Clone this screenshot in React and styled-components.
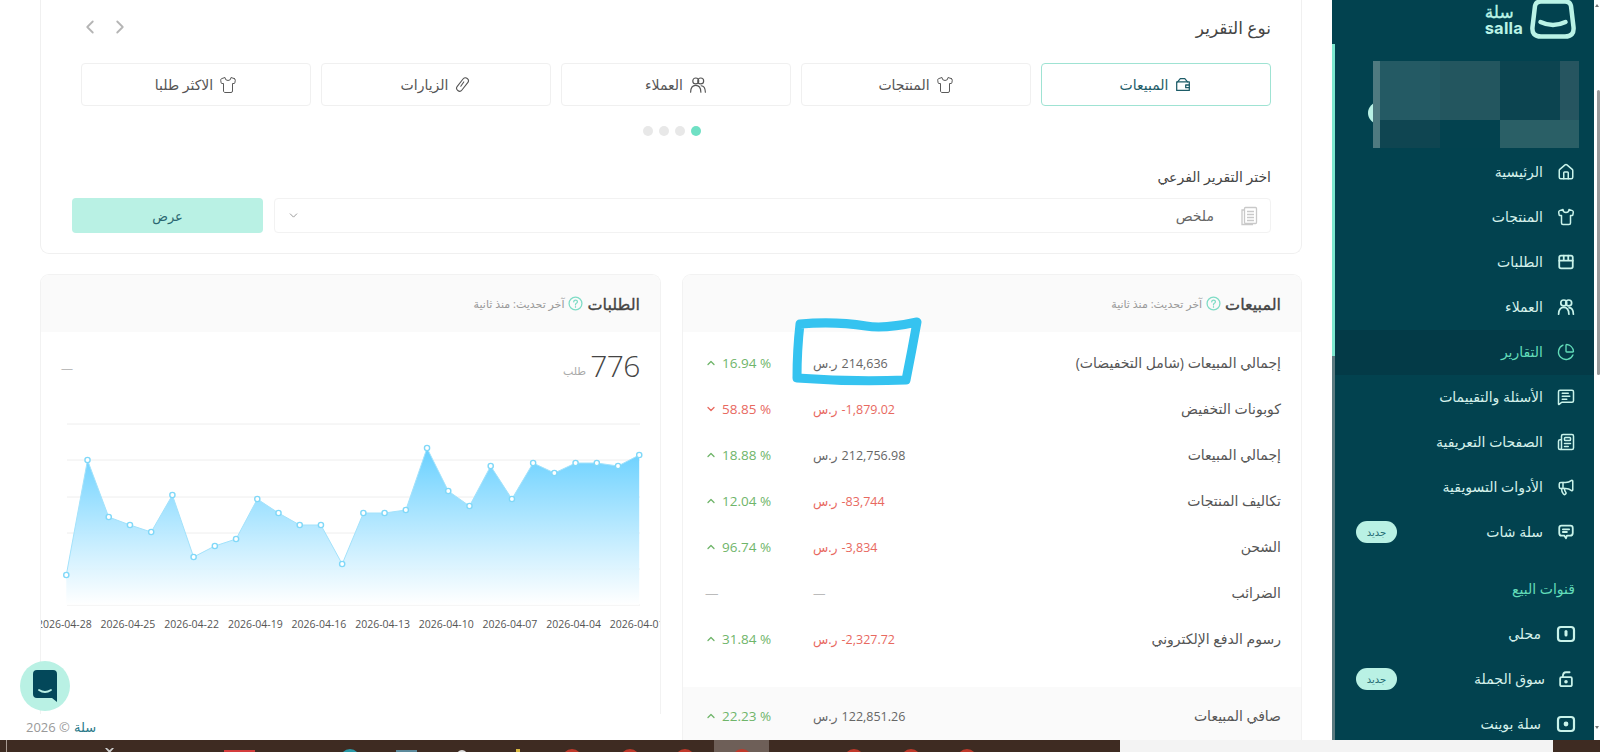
import React from "react";
import styled, { createGlobalStyle } from "styled-components";
import { House, Shirt, ChartPie, MessageSquareText, Newspaper, Megaphone, ChevronLeft, ChevronRight, ChevronDown, ChevronUp } from "lucide-react";

const Global = createGlobalStyle`
  html, body { margin: 0; padding: 0; background: #fff; overflow: hidden; }
  * { box-sizing: border-box; }
  body { font-family: "Open Sans", "DejaVu Sans", sans-serif; }
`;

const Root = styled.div`
  width: 1600px; height: 752px; display: flex; flex-direction: column; overflow: hidden;
`;
const Screen = styled.div`
  height: 740px; display: flex; direction: ltr;
`;
const Main = styled.main`
  position: relative; width: 1332px; height: 740px; padding: 0 30px 0 40px; overflow: hidden; direction: rtl;
  display: flex; flex-direction: column; gap: 20px; background: #fff;
`;

/* report card */
const ReportCard = styled.section`
  height: 254px; flex: none; border: 1px solid #f0f0f0; border-top: 0; border-radius: 0 0 9px 9px;
  padding: 0 30px 0 31px; display: flex; flex-direction: column;
`;
const TitleRow = styled.div`
  height: 58px; margin-bottom: 5px; padding: 0 0 3px 7px; display: flex; align-items: center; justify-content: space-between;
`;
const CardTitle = styled.h2`
  margin: 0; font-size: 17px; font-weight: 400; color: #444;
`;
const Arrows = styled.div`
  display: flex; gap: 8px; color: #b5b5b5; direction: ltr; margin-top: -2px;
`;
const Tabs = styled.div`
  display: grid; grid-template-columns: repeat(5, 230px); gap: 10px; margin-left: 9px;
`;
const Tab = styled.div`
  height: 43px; border: 1px solid ${p => (p.$active ? "#9fe3d3" : "#f0f0f0")}; border-radius: 4px;
  display: flex; align-items: center; justify-content: center; gap: 6px; font-size: 14px;
  color: ${p => (p.$active ? "#1d5c68" : "#555")};
`;
const Dots = styled.div`
  display: flex; justify-content: center; gap: 6px; margin-top: 20px;
`;
const Dot = styled.span`
  width: 10px; height: 10px; border-radius: 50%; background: ${p => (p.$active ? "#6fe0c4" : "#e8e8e8")};
`;
const FieldLabel = styled.div`
  margin-top: 32px; margin-bottom: 13px; height: 17px; line-height: 17px; font-size: 14px; color: #444;
`;
const FieldRow = styled.div`
  display: flex; gap: 11px;
`;
const SelectBox = styled.div`
  flex: 1; height: 35px; border: 1px solid #f2f2f2; border-radius: 4px; display: flex; align-items: center;
  padding: 0 12px; gap: 26px; font-size: 14px; color: #666;
`;
const SelectCaret = styled.span`
  margin-right: auto; color: #999; display: flex;
`;
const ViewButton = styled.button`
  width: 191px; height: 35px; border: 0; border-radius: 4px; background: #b9f1e4; color: #2a6670; font: inherit; font-size: 13px;
`;

/* lower grid */
const Lower = styled.div`
  display: grid; grid-template-columns: 620px 621px; gap: 21px; align-items: start;
`;
const Panel = styled.section`
  border: 1px solid #f2f2f2; border-bottom: 0; border-radius: 9px 9px 0 0; overflow: hidden; background: #fff;
  height: ${p => p.$h}px;
`;
const PanelHeader = styled.header`
  height: 57px; background: #fafafa; padding: 0 20px; display: flex; align-items: center; gap: 4px;
`;
const PanelTitle = styled.h3`
  margin: 0; font-size: 16px; font-weight: 400; color: #444; -webkit-text-stroke: 0.35px #444;
`;
const Updated = styled.span`
  font-size: 11px; color: #999;
`;
const Rows = styled.div`
  padding-top: 9px;
`;
const Row = styled.div`
  height: 46px; display: flex; align-items: center; padding: 0 20px 2px 22px; font-size: 14px; color: #555;
`;
const RowLabel = styled.span`
  flex: 1; margin-top: -2px;
`;
const Money = styled.span`
  width: 200px; display: flex; justify-content: flex-end; gap: 4px; font-size: 12.5px;
  color: ${p => (p.$neg ? "#e8695f" : "#666")};
`;
const Num = styled.bdi`
  direction: ltr; font-family: "Open Sans", sans-serif; color: ${p => (p.$none ? "#bbb" : "inherit")};
`;
const Delta = styled.span`
  width: 108px; display: flex; direction: ltr; align-items: center; gap: 5px; font-size: 13.5px;
  color: ${p => (p.$down ? "#e8695f" : p.$none ? "#bbb" : "#6fb56a")};
`;
const NetRow = styled(Row)`
  margin-top: 24px; height: 60px; background: #fafafa; font-weight: 400;
`;
const Stat = styled.div`
  height: 79px; padding: 0 20px 12px 20px; display: flex; align-items: center; gap: 4px;
`;
const StatNum = styled.span`
  font-size: 30px; font-weight: 300; color: #444; font-family: "Open Sans", sans-serif; letter-spacing: -0.5px;
`;
const StatUnit = styled.span`
  font-size: 11px; color: #aaa; align-self: center; margin-top: 9px;
`;
const StatDash = styled.span`
  margin-right: auto; color: #bbb; font-size: 12px; margin-top: 6px;
`;
const ChartSvg = styled.svg`
  display: block;
`;
const AxisLabel = styled.text`
  font-family: "Open Sans", sans-serif; font-size: 10.5px; fill: #555; text-anchor: middle;
`;
const Annotation = styled.svg`
  position: absolute; left: 780px; top: 305px; pointer-events: none;
`;
const ChatFab = styled.div`
  position: absolute; left: 20px; top: 661px; width: 50px; height: 50px; border-radius: 50%; background: #b9f1e4;
  display: flex; align-items: center; justify-content: center;
`;
const Copyright = styled.div`
  position: absolute; left: 26px; top: 718px; font-size: 13px; color: #999; display: flex; gap: 4px; direction: rtl;
`;
const CopyName = styled.span`
  color: #2a7a8a;
`;

/* sidebar */
const Sidebar = styled.aside`
  position: relative; width: 262px; height: 740px; background: #02424f; direction: rtl; display: flex; flex-direction: column; overflow: hidden;
  &::before {
    content: ""; position: absolute; left: 0; top: 0; bottom: 0; width: 3px;
    background: linear-gradient(#02424f 0 44px, #7de8cf 44px 356px, #5b7a80 356px);
  }
`;
const LogoBar = styled.div`
  height: 61px; flex: none; display: flex; align-items: flex-start; gap: 7px; padding-right: 18px;
`;
const LogoText = styled.div`
  display: flex; flex-direction: column; align-items: flex-end; color: #baf3e6; margin-top: 3px;
`;
const LogoAr = styled.span`
  font-size: 17px; line-height: 18px; font-weight: 400; -webkit-text-stroke: 0.3px #baf3e6;
`;
const LogoEn = styled.span`
  font-family: "Inter", sans-serif; font-size: 16.5px; line-height: 15px; font-weight: 700; direction: ltr; letter-spacing: 0.2px;
`;
const StoreWrap = styled.div`
  position: relative; height: 89px; flex: none; margin-right: 15px; width: 206px;
`;
const Mosaic = styled.div`
  position: relative; direction: ltr; display: grid; grid-template-columns: 7px 60px 60px 60px 19px; grid-template-rows: 59px 28px;
`;
const MosaicCell = styled.div`
  background: ${p => p.$c};
`;
const AvatarEdge = styled.span`
  position: absolute; left: -5px; top: 41px; width: 22px; height: 22px; border-radius: 50%; background: #b9f1e4;
`;
const Item = styled.div`
  height: 45px; flex: none; display: flex; align-items: center; padding: 0 18px 2px 24px; gap: ${p => p.$gap || 13}px;
  font-size: 14px; color: ${p => (p.$active ? "#62dcb9" : "#d5f1eb")};
  background: ${p => (p.$active ? "#033a47" : "transparent")};
`;
const ItemIcon = styled.span`
  width: 20px; height: 20px; display: flex; align-items: center; justify-content: center; color: ${p => (p.$active ? "#62dcb9" : "#c9f3ea")};
`;
const Badge = styled.span`
  margin-right: auto; width: 41px; height: 22px; border-radius: 11px; background: #b9f1e4; color: #1f6a72; font-size: 10px;
  display: flex; align-items: center; justify-content: center;
`;
const SectionTitle = styled.div`
  height: 57px; flex: none; padding: 21px 19px 0 0; font-size: 14px; line-height: 26px; color: #62dcb9;
`;
const Strip = styled.div`
  position: relative; width: 6px; height: 740px; background: #fff;
`;
const Thumb = styled.div`
  position: absolute; left: 3px; top: 90px; height: 285px; width: 3px; background: #9a9a9a; border-radius: 2px;
`;
const ScrollArrow = styled.span`
  position: absolute; left: 1px; top: ${p => p.$top}px; width: 0; height: 0;
  border-left: 2.500px solid transparent; border-right: 2.500px solid transparent;
  ${p => (p.$down ? "border-top: 3px solid #777;" : "border-bottom: 3px solid #777;")}
`;

/* taskbar */
const Taskbar = styled.footer`
  height: 12px; background: #3e2b22; display: flex; overflow: hidden; direction: ltr;
`;
const Tray = styled.div`
  width: 1120px; flex: none; display: flex;
`;
const TaskIcon = styled.span`
  flex: none; width: ${p => p.$w}px; height: ${p => p.$h || 20}px; margin-left: ${p => p.$gap}px; margin-top: ${p => p.$top}px;
  background: ${p => p.$c}; border-radius: ${p => (p.$round ? "50%" : "0")};
  ${p => p.$v && "clip-path: polygon(0 0, 22% 0, 50% 55%, 78% 0, 100% 0, 62% 100%, 38% 100%);"}
`;
const ActiveSlot = styled.span`
  flex: none; width: 55px; margin-left: 19px; height: 12px; background: #6e5f58; display: flex; justify-content: center;
`;
const SearchBox = styled.div`
  width: 433px; flex: none; background: #f3f3f3;
`;

const Logo = () => (
  <svg width="46" height="39" viewBox="0 0 46 39" fill="none" stroke="#baf3e6" strokeWidth="4.5" strokeLinecap="round" strokeLinejoin="round">
    <path d="M11 1.500 H35 Q40 1.500 41 6 L43.500 27 Q44.500 36.500 35 36.500 H11 Q1.500 36.500 2.500 27 L5 6 Q6 1.500 11 1.500 Z" />
    <path d="M10.500 22 Q23 28 35.500 22" />
  </svg>
);
const IconBase = ({ children, size = 18, sw = 2 }) => (
  <svg width={size} height={size} viewBox="0 0 20 20" fill="none" stroke="currentColor" strokeWidth={sw} strokeLinecap="round" strokeLinejoin="round">{children}</svg>
);
const BoxIcon = () => (
  <IconBase><rect x="2.500" y="3" width="15" height="14" rx="2" /><path d="M2.500 8.500 H17.500 M7.500 3 V8.500 M12.500 3 V8.500" /></IconBase>
);
const PeopleIcon = ({ size = 18, sw = 1.9 }) => (
  <IconBase size={size} sw={sw}>
    <circle cx="7.500" cy="5.500" r="3.300" /><circle cx="13" cy="5.500" r="3.300" />
    <path d="M1.800 18 Q2 10.500 7.500 10.500 Q13 10.500 13.200 18" /><path d="M13.500 10.800 Q18 11 18.200 18" />
  </IconBase>
);
const ChatIcon = () => (
  <IconBase><path d="M5 3 H15 Q17.500 3 17.500 5.500 V11 Q17.500 14 14.500 14 H11 L10 17 L8 14 H5 Q2.500 14 2.500 11 V5.500 Q2.500 3 5 3 Z" /><path d="M6.500 7 H13.500 M6.500 10 H11" /></IconBase>
);
const StoreIcon = ({ mark }) => (
  <IconBase sw={2.200} size={20}>
    <rect x="2" y="3" width="16" height="14" rx="3" />
    {mark === "pin" ? <path d="M10 7.500 V11" strokeWidth="3" /> : <circle cx="10" cy="10" r="1.300" fill="currentColor" />}
  </IconBase>
);
const LockBagIcon = () => (
  <IconBase sw={2}>
    <path d="M5 8 H15 Q16.500 8 16.500 9.500 V16 Q16.500 18 14.500 18 H5.500 Q3.500 18 3.500 16 V9.500 Q3.500 8 5 8 Z" />
    <path d="M6.500 7.500 Q6.500 2.500 10 2.500 H14" /><circle cx="10" cy="13" r="1" fill="currentColor" />
  </IconBase>
);
const WalletIcon = () => (
  <IconBase size={18} sw={1.4}>
    <path d="M3 6.500 H17 V16 H3 Z" /><path d="M4 6.500 L7 3 H12 L15 6.500" /><path d="M17 10 H13 V13 H17" />
  </IconBase>
);
const ClipIcon = () => (
  <IconBase size={17} sw={1.3}>
    <rect x="6.500" y="1" width="7" height="18" rx="3.500" transform="rotate(38 10 10)" />
    <path d="M11.500 7 L8 12" />
  </IconBase>
);
const SheetIcon = () => (
  <svg width="18" height="20" viewBox="0 0 18 20" fill="none" stroke="#c9c9c9" strokeWidth="1.300">
    <rect x="4.500" y="1.500" width="12" height="16" rx="1" /><path d="M7 5.500 H14 M7 8.500 H14 M7 11.500 H14 M7 14.500 H14" /><path d="M4.500 4 H2 V18.500 H13" />
  </svg>
);
const HelpIcon = () => (
  <svg width="15" height="15" viewBox="0 0 14 14" fill="none" stroke="#7fdcc6" strokeWidth="1.200">
    <circle cx="7" cy="7" r="6" /><path d="M5.300 5.500 Q5.500 3.800 7 3.800 Q8.800 3.800 8.800 5.300 Q8.800 6.300 7.500 7 Q7 7.300 7 8.300 M7 10 V10.400" strokeLinecap="round" />
  </svg>
);
const ChatLogo = () => (
  <svg width="26" height="34" viewBox="0 0 26 34">
    <path d="M5 1 H21 Q25 1 25 5 V27 Q25 28 25 33 L20 29 H5 Q1 29 1 25 V5 Q1 1 5 1 Z" fill="#03485a" />
    <path d="M7 21 Q13 25 19 21" stroke="#b9f1e4" strokeWidth="1.800" fill="none" strokeLinecap="round" />
  </svg>
);
const Up = () => <ChevronUp size={12} strokeWidth={2.6} color="#6fb56a" />;
const Down = () => <ChevronDown size={12} strokeWidth={2.6} color="#e8695f" />;

const R = "ر.س";
const rows = [
  { label: "إجمالي المبيعات (شامل التخفيضات)", value: "214,636", delta: "16.94 %" },
  { label: "كوبونات التخفيض", value: "-1,879.02", neg: true, delta: "58.85 %", down: true },
  { label: "إجمالي المبيعات", value: "212,756.98", delta: "18.88 %" },
  { label: "تكاليف المنتجات", value: "-83,744", neg: true, delta: "12.04 %" },
  { label: "الشحن", value: "-3,834", neg: true, delta: "96.74 %" },
  { label: "الضرائب" },
  { label: "رسوم الدفع الإلكتروني", value: "-2,327.72", neg: true, delta: "31.84 %" },
];

const ys = [574, 459, 516, 524, 531, 494, 556, 545, 538, 498, 512, 524, 524, 563, 512, 512, 509, 447, 490, 505, 465, 498, 462, 472, 462, 462, 465, 454];
const pts = ys.map((y, i) => [26.3 + i * 21.22, y - 410]);
const linePath = pts.map((p, i) => `${i ? "L" : "M"}${p[0].toFixed(1)} ${p[1]}`).join(" ");
const areaPath = `${linePath} L${pts[pts.length - 1][0].toFixed(1)} 194 L${pts[0][0].toFixed(1)} 194 Z`;
const dates = ["2026-04-28", "2026-04-25", "2026-04-22", "2026-04-19", "2026-04-16", "2026-04-13", "2026-04-10", "2026-04-07", "2026-04-04", "2026-04-01"];
const grid = [13, 49, 86, 122, 158, 194];

const Chart = () => (
  <ChartSvg width="619" height="230" viewBox="1 0 619 230">
    <defs>
      <linearGradient id="area" gradientUnits="userSpaceOnUse" x1="0" y1="38" x2="0" y2="194">
        <stop offset="0" stopColor="#68d0ff" />
        <stop offset="1" stopColor="#ffffff" stopOpacity="0.9" />
      </linearGradient>
    </defs>
    {grid.map(y => <line key={y} x1="27" x2="600" y1={y} y2={y} stroke="#eeeeee" />)}
    <path d={areaPath} fill="url(#area)" />
    <path d={linePath} fill="none" stroke="#a3e2fb" strokeWidth="1" />
    {pts.map((p, i) => <circle key={i} cx={p[0]} cy={p[1]} r="2.600" fill="#fff" stroke="#80d8f8" strokeWidth="1.400" />)}
    {dates.map((d, i) => <AxisLabel key={d} x={pts[i * 3][0] - 2} y="217">{d}</AxisLabel>)}
  </ChartSvg>
);

const nav = [
  { t: "الرئيسية", i: <House size={18} strokeWidth={2} /> },
  { t: "المنتجات", i: <Shirt size={18} strokeWidth={2} /> },
  { t: "الطلبات", i: <BoxIcon /> },
  { t: "العملاء", i: <PeopleIcon /> },
  { t: "التقارير", i: <ChartPie size={18} strokeWidth={1.8} />, active: true },
  { t: "الأسئلة والتقييمات", i: <MessageSquareText size={18} strokeWidth={2} /> },
  { t: "الصفحات التعريفية", i: <Newspaper size={18} strokeWidth={2} /> },
  { t: "الأدوات التسويقية", i: <Megaphone size={18} strokeWidth={2} /> },
  { t: "سلة شات", i: <ChatIcon />, badge: true },
];
const channels = [
  { t: "محلي", i: <StoreIcon mark="pin" />, gap: 15 },
  { t: "سوق الجملة", i: <LockBagIcon />, badge: true, gap: 11 },
  { t: "سلة بوينت", i: <StoreIcon />, gap: 15 },
];
const mosaic = ["#4f7a80", "#245a64", "#23565f", "#0c4450", "#265560", "#4f7a80", "#0f4551", "#03424f", "#2a5f66", "#2a5f66"];

const taskIcons = [
  { gap: 6, w: 1, top: 0, c: "#a89a92" },
  { gap: 98, w: 9, top: 8, h: 4, c: "#cfcfcf", v: true },
  { gap: 110, w: 31, top: 10, c: "#d43c3c" },
  { gap: 85, w: 20, top: 9, c: "#2a9aa8", round: true },
  { gap: 36, w: 21, top: 10, c: "#5c8a9c" },
  { gap: 38, w: 14, top: 10, c: "#dddddd", round: true },
  { gap: 47, w: 4, top: 9, c: "#d8b840" },
  { gap: 42, w: 20, top: 9, c: "#c0392b", round: true },
  { gap: 38, w: 20, top: 9, c: "#c0392b", round: true },
  { gap: 35, w: 20, top: 9, c: "#c0392b", round: true },
];
const taskIconsAfter = [
  { gap: 75, w: 20, top: 9, c: "#c0392b", round: true },
  { gap: 37, w: 20, top: 9, c: "#c0392b", round: true },
  { gap: 36, w: 20, top: 9, c: "#c0392b", round: true },
];

const renderTask = (t, i) => <TaskIcon key={i} $gap={t.gap} $w={t.w} $top={t.top} $h={t.h} $c={t.c} $round={t.round} $v={t.v} />;

export default function App() {
  return (
    <Root>
      <Global />
      <Screen>
        <Main>
          <ReportCard>
            <TitleRow>
              <CardTitle>نوع التقرير</CardTitle>
              <Arrows><ChevronLeft size={22} strokeWidth={2} /><ChevronRight size={22} strokeWidth={2} /></Arrows>
            </TitleRow>
            <Tabs>
              <Tab $active><WalletIcon />المبيعات</Tab>
              <Tab><Shirt size={18} strokeWidth={1.3} />المنتجات</Tab>
              <Tab><PeopleIcon size={18} sw={1.3} />العملاء</Tab>
              <Tab><ClipIcon />الزيارات</Tab>
              <Tab><Shirt size={18} strokeWidth={1.3} />الاكثر طلبا</Tab>
            </Tabs>
            <Dots><Dot $active /><Dot /><Dot /><Dot /></Dots>
            <FieldLabel>اختر التقرير الفرعي</FieldLabel>
            <FieldRow>
              <SelectBox>
                <SheetIcon />ملخص
                <SelectCaret><ChevronDown size={13} strokeWidth={1.8} /></SelectCaret>
              </SelectBox>
              <ViewButton>عرض</ViewButton>
            </FieldRow>
          </ReportCard>
          <Lower>
            <Panel $h={470}>
              <PanelHeader>
                <PanelTitle>المبيعات</PanelTitle><HelpIcon /><Updated>آخر تحديث: منذ ثانية</Updated>
              </PanelHeader>
              <Rows>
                {rows.map(r => (
                  <Row key={r.label}>
                    <RowLabel>{r.label}</RowLabel>
                    {r.value ? (
                      <Money $neg={r.neg}><Num>{r.value}</Num><span>{R}</span></Money>
                    ) : <Money><Num $none>—</Num></Money>}
                    {r.delta ? (
                      <Delta $down={r.down}>{r.down ? <Down /> : <Up />}{r.delta}</Delta>
                    ) : <Delta $none>—</Delta>}
                  </Row>
                ))}
              </Rows>
              <NetRow>
                <RowLabel>صافي المبيعات</RowLabel>
                <Money><Num>122,851.26</Num><span>{R}</span></Money>
                <Delta><Up />22.23 %</Delta>
              </NetRow>
            </Panel>
            <Panel $h={440}>
              <PanelHeader>
                <PanelTitle>الطلبات</PanelTitle><HelpIcon /><Updated>آخر تحديث: منذ ثانية</Updated>
              </PanelHeader>
              <Stat>
                <StatNum>776</StatNum><StatUnit>طلب</StatUnit><StatDash>—</StatDash>
              </Stat>
              <Chart />
            </Panel>
          </Lower>
          <Annotation width="150" height="85" viewBox="780 305 150 85">
            <path d="M800 324 Q835 321 866 326 Q885 329 917 322 Q912 350 906 380 Q850 382 797 378 Q797 350 800 324 Z" fill="none" stroke="#35c3f0" strokeWidth="9" strokeLinejoin="round" />
          </Annotation>
          <ChatFab><ChatLogo /></ChatFab>
          <Copyright><CopyName>سلة</CopyName><span>© 2026</span></Copyright>
        </Main>
        <Sidebar>
          <LogoBar>
            <Logo />
            <LogoText><LogoAr>سلة</LogoAr><LogoEn>salla</LogoEn></LogoText>
          </LogoBar>
          <StoreWrap>
            <AvatarEdge />
            <Mosaic>{mosaic.map((c, i) => <MosaicCell key={i} $c={c} />)}</Mosaic>
          </StoreWrap>
          {nav.map(n => (
            <Item key={n.t} $active={n.active}>
              <ItemIcon $active={n.active}>{n.i}</ItemIcon>{n.t}{n.badge && <Badge>جديد</Badge>}
            </Item>
          ))}
          <SectionTitle>قنوات البيع</SectionTitle>
          {channels.map(n => (
            <Item key={n.t} $gap={n.gap}>
              <ItemIcon>{n.i}</ItemIcon>{n.t}{n.badge && <Badge>جديد</Badge>}
            </Item>
          ))}
        </Sidebar>
        <Strip>
          <ScrollArrow $top={4} />
          <Thumb />
          <ScrollArrow $top={726} $down />
        </Strip>
      </Screen>
      <Taskbar>
        <Tray>
          {taskIcons.map(renderTask)}
          <ActiveSlot><TaskIcon $gap={0} $w={20} $top={9} $c="#c0392b" $round /></ActiveSlot>
          {taskIconsAfter.map(renderTask)}
        </Tray>
        <SearchBox />
      </Taskbar>
    </Root>
  );
}
